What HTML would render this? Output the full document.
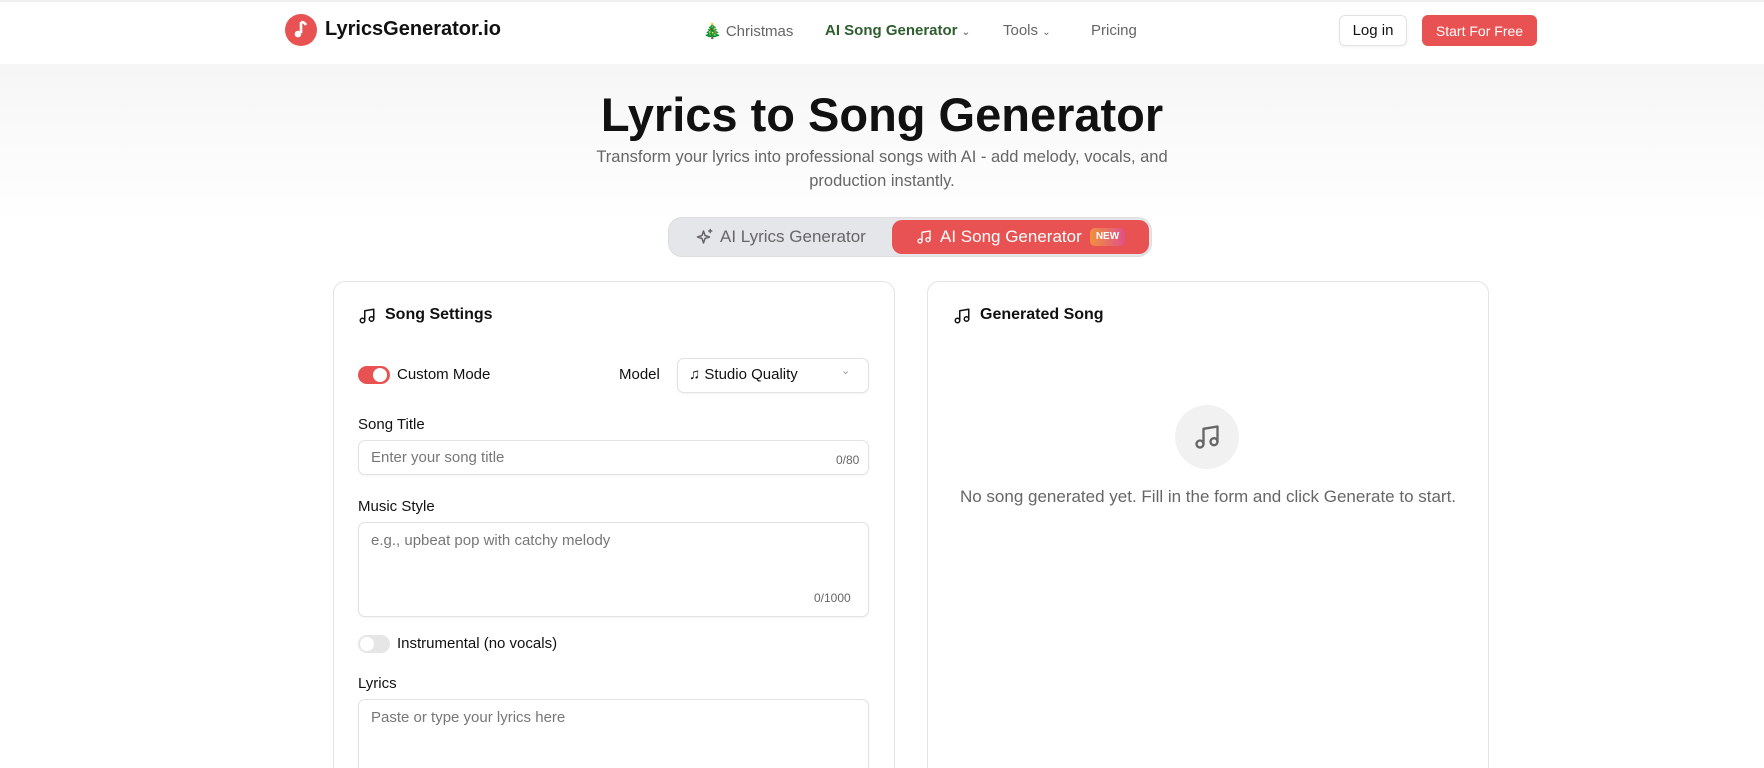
<!DOCTYPE html>
<html style="height:768px;overflow:hidden"><head><meta charset="utf-8"><style>
*{box-sizing:border-box;margin:0;padding:0}
body{width:1764px;height:768px;overflow:hidden;font-family:"Liberation Sans",sans-serif;color:#111;background:#fff;position:relative}
.a{position:absolute}
.hdr{left:0;top:0;width:1764px;height:64px;background:#fff;border-top:2px solid #f0f0f0}
.hero{left:0;top:64px;width:1764px;height:160px;background:linear-gradient(#f6f6f6,#fff)}
.nav{font-size:15px;color:#666;top:22px}
.btn{border-radius:6px;font-size:15px;display:flex;align-items:center;justify-content:center}
.card{border:1px solid #e4e4e4;border-bottom:none;border-radius:12px 12px 0 0;background:#fff}
.lbl{font-size:15px;color:#111}
.inp{border:1px solid #e2e2e2;border-radius:7px;box-shadow:0 1px 2px rgba(0,0,0,.05);background:#fff}
.ph{font-size:15px;color:#777}
.cnt{font-size:12px;color:#666}
svg.i{fill:none;stroke:currentColor;stroke-width:2;stroke-linecap:round;stroke-linejoin:round}
</style></head><body>
<div class="a hdr"></div>
<div class="a hero"></div>
<div class="a" style="left:285px;top:14px;width:32px;height:32px;border-radius:50%;background:#e85252"></div>
<svg class="a" style="left:291px;top:19px" width="20" height="22" viewBox="0 0 20 22"><path d="M10 3v11" stroke="#fff" stroke-width="2.6"/><path d="M10 3c2 0 4 1 5 3" stroke="#fff" stroke-width="2.6" fill="none"/><circle cx="7" cy="15" r="3.3" fill="#fff"/></svg>
<div class="a" style="left:325px;top:18px;font-size:20px;font-weight:600;color:#111">LyricsGenerator.io</div>
<div class="a nav" style="left:703px">🎄 Christmas</div>
<div class="a nav" style="left:825px;color:#2e5d2e;font-weight:600">AI Song Generator <span style="font-size:10px;color:#888">⌄</span></div>
<div class="a nav" style="left:1003px">Tools <span style="font-size:10px">⌄</span></div>
<div class="a nav" style="left:1091px">Pricing</div>
<div class="a btn" style="left:1339px;top:15px;width:68px;height:31px;border:1px solid #e2e2e2;background:#fff;box-shadow:0 1px 3px rgba(0,0,0,.06)">Log in</div>
<div class="a btn" style="left:1422px;top:15px;width:115px;height:31px;background:#e85252;color:#fff;font-size:14px">Start For Free</div>
<div class="a" style="left:0;width:1764px;top:87px;text-align:center;font-size:47px;font-weight:700;color:#111">Lyrics to Song Generator</div>
<div class="a" style="left:582px;width:600px;top:145px;text-align:center;font-size:16.5px;line-height:24px;color:#666">Transform your lyrics into professional songs with AI - add melody, vocals, and production instantly.</div>
<div class="a" style="left:668px;top:217px;width:484px;height:40px;border-radius:14px;background:#e5e6ea;border:1px solid #ddd"></div>
<svg class="a i" style="left:696px;top:228px;color:#666" width="18" height="18" viewBox="0 0 24 24"><path d="M10 4l2 6 6 2-6 2-2 6-2-6-6-2 6-2z"/><path d="M19 2v4M17 4h4"/></svg>
<div class="a" style="left:720px;top:227px;font-size:17px;color:#666">AI Lyrics Generator</div>
<div class="a" style="left:892px;top:220px;width:257px;height:34px;border-radius:10px;background:#e85252"></div>
<svg class="a i" style="left:916px;top:229px;color:#fff" width="16" height="16" viewBox="0 0 24 24"><path d="M9 18V5l12-2v13"/><circle cx="6" cy="18" r="3"/><circle cx="18" cy="16" r="3"/></svg>
<div class="a" style="left:940px;top:227px;font-size:17px;color:#fff">AI Song Generator</div>
<div class="a" style="left:1090px;top:228px;width:35px;height:18px;border-radius:5px;background:linear-gradient(90deg,#f0903c,#e0508a);color:#fff;font-size:10px;font-weight:700;text-align:center;line-height:18px">NEW</div>

<div class="a card" style="left:333px;top:281px;width:562px;height:487px"></div>
<div class="a card" style="left:927px;top:281px;width:562px;height:487px"></div>
<svg class="a i" style="left:358px;top:307px" width="18" height="18" viewBox="0 0 24 24"><path d="M9 18V5l12-2v13"/><circle cx="6" cy="18" r="3"/><circle cx="18" cy="16" r="3"/></svg>
<div class="a" style="left:385px;top:306px;font-size:16px;font-weight:600">Song Settings</div>
<div class="a" style="left:358px;top:366px;width:32px;height:18px;border-radius:9px;background:#e85252"></div>
<div class="a" style="left:373px;top:368px;width:14px;height:14px;border-radius:50%;background:#fff"></div>
<div class="a lbl" style="left:397px;top:366px">Custom Mode</div>
<div class="a lbl" style="left:619px;top:366px">Model</div>
<div class="a inp" style="left:677px;top:358px;width:192px;height:35px"></div>
<div class="a lbl" style="left:689px;top:366px">♫ Studio Quality</div>
<div class="a" style="left:841px;top:364px;font-size:11px;color:#999">⌄</div>
<div class="a lbl" style="left:358px;top:416px">Song Title</div>
<div class="a inp" style="left:358px;top:440px;width:511px;height:35px"></div>
<div class="a ph" style="left:371px;top:449px">Enter your song title</div>
<div class="a cnt" style="left:836px;top:453px">0/80</div>
<div class="a lbl" style="left:358px;top:498px">Music Style</div>
<div class="a inp" style="left:358px;top:522px;width:511px;height:95px"></div>
<div class="a ph" style="left:371px;top:532px">e.g., upbeat pop with catchy melody</div>
<div class="a cnt" style="left:814px;top:591px">0/1000</div>
<div class="a" style="left:358px;top:635px;width:32px;height:18px;border-radius:9px;background:#e6e6e6"></div>
<div class="a" style="left:360px;top:637px;width:14px;height:14px;border-radius:50%;background:#fff"></div>
<div class="a lbl" style="left:397px;top:635px">Instrumental (no vocals)</div>
<div class="a lbl" style="left:358px;top:675px">Lyrics</div>
<div class="a inp" style="left:358px;top:699px;width:511px;height:69px;border-bottom:none;border-radius:7px 7px 0 0"></div>
<div class="a ph" style="left:371px;top:709px">Paste or type your lyrics here</div>

<svg class="a i" style="left:953px;top:307px" width="18" height="18" viewBox="0 0 24 24"><path d="M9 18V5l12-2v13"/><circle cx="6" cy="18" r="3"/><circle cx="18" cy="16" r="3"/></svg>
<div class="a" style="left:980px;top:306px;font-size:16px;font-weight:600">Generated Song</div>
<div class="a" style="left:1175px;top:405px;width:64px;height:64px;border-radius:50%;background:#f1f1f1"></div>
<svg class="a i" style="left:1193px;top:423px;color:#666" width="28" height="28" viewBox="0 0 24 24"><path d="M9 18V5l12-2v13"/><circle cx="6" cy="18" r="3"/><circle cx="18" cy="16" r="3"/></svg>
<div class="a" style="left:927px;width:562px;top:487px;text-align:center;font-size:17px;color:#666">No song generated yet. Fill in the form and click Generate to start.</div>
</body></html>
